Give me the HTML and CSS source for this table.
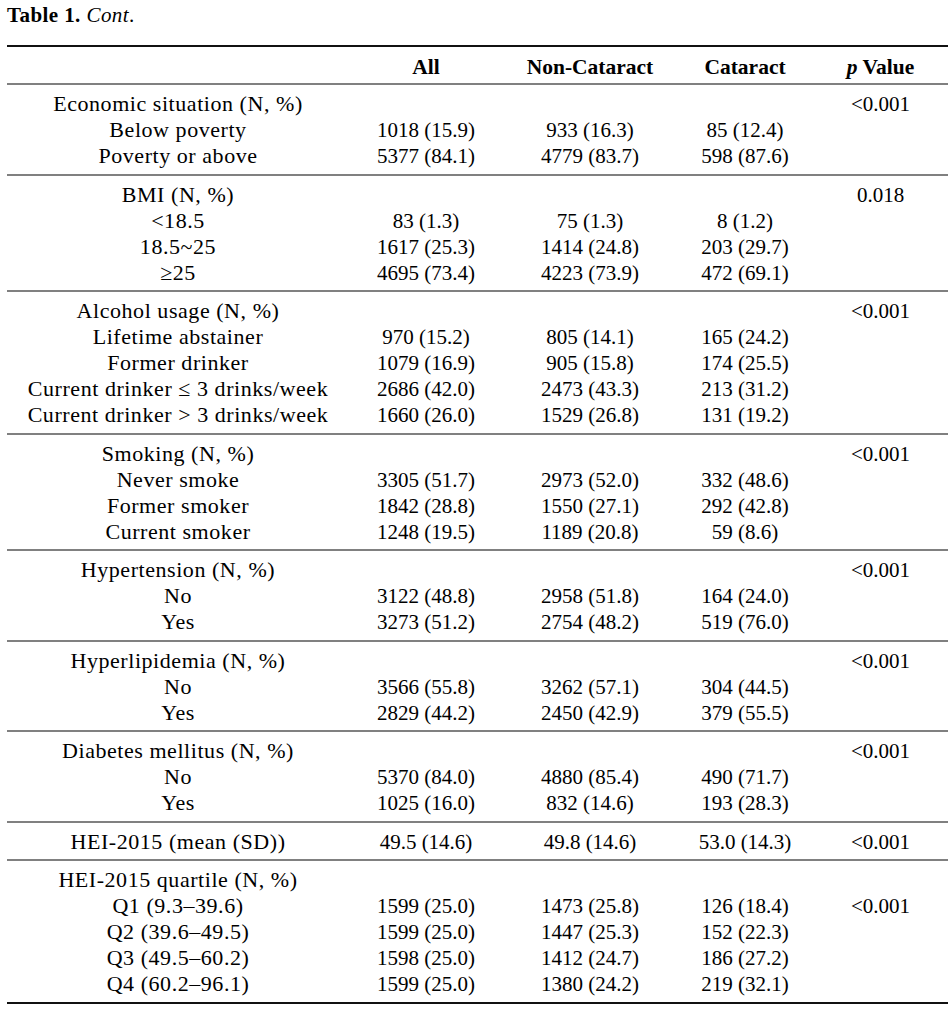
FILE: index.html
```html
<!DOCTYPE html>
<html lang="en">
<head>
<meta charset="utf-8">
<title>Table 1. Cont.</title>
<link rel="stylesheet" href="styles.css">
</head>
<body>
<div class="page">
  <div class="caption"><b>Table 1.</b> <i>Cont</i>.</div>
  <div class="table">
    <div class="row head">
      <div class="label"></div>
      <div>All</div>
      <div>Non-Cataract</div>
      <div>Cataract</div>
      <div><i>p</i> Value</div>
    </div>

    <div class="group">
      <div class="row"><div class="label">Economic situation (N, %)</div><div></div><div></div><div></div><div>&lt;0.001</div></div>
      <div class="row"><div class="label">Below poverty</div><div>1018 (15.9)</div><div>933 (16.3)</div><div>85 (12.4)</div><div></div></div>
      <div class="row"><div class="label">Poverty or above</div><div>5377 (84.1)</div><div>4779 (83.7)</div><div>598 (87.6)</div><div></div></div>
    </div>

    <div class="group">
      <div class="row"><div class="label">BMI (N, %)</div><div></div><div></div><div></div><div>0.018</div></div>
      <div class="row"><div class="label">&lt;18.5</div><div>83 (1.3)</div><div>75 (1.3)</div><div>8 (1.2)</div><div></div></div>
      <div class="row"><div class="label">18.5~25</div><div>1617 (25.3)</div><div>1414 (24.8)</div><div>203 (29.7)</div><div></div></div>
      <div class="row"><div class="label">&ge;25</div><div>4695 (73.4)</div><div>4223 (73.9)</div><div>472 (69.1)</div><div></div></div>
    </div>

    <div class="group">
      <div class="row"><div class="label">Alcohol usage (N, %)</div><div></div><div></div><div></div><div>&lt;0.001</div></div>
      <div class="row"><div class="label">Lifetime abstainer</div><div>970 (15.2)</div><div>805 (14.1)</div><div>165 (24.2)</div><div></div></div>
      <div class="row"><div class="label">Former drinker</div><div>1079 (16.9)</div><div>905 (15.8)</div><div>174 (25.5)</div><div></div></div>
      <div class="row"><div class="label">Current drinker &le; 3 drinks/week</div><div>2686 (42.0)</div><div>2473 (43.3)</div><div>213 (31.2)</div><div></div></div>
      <div class="row"><div class="label">Current drinker &gt; 3 drinks/week</div><div>1660 (26.0)</div><div>1529 (26.8)</div><div>131 (19.2)</div><div></div></div>
    </div>

    <div class="group">
      <div class="row"><div class="label">Smoking (N, %)</div><div></div><div></div><div></div><div>&lt;0.001</div></div>
      <div class="row"><div class="label">Never smoke</div><div>3305 (51.7)</div><div>2973 (52.0)</div><div>332 (48.6)</div><div></div></div>
      <div class="row"><div class="label">Former smoker</div><div>1842 (28.8)</div><div>1550 (27.1)</div><div>292 (42.8)</div><div></div></div>
      <div class="row"><div class="label">Current smoker</div><div>1248 (19.5)</div><div>1189 (20.8)</div><div>59 (8.6)</div><div></div></div>
    </div>

    <div class="group">
      <div class="row"><div class="label">Hypertension (N, %)</div><div></div><div></div><div></div><div>&lt;0.001</div></div>
      <div class="row"><div class="label">No</div><div>3122 (48.8)</div><div>2958 (51.8)</div><div>164 (24.0)</div><div></div></div>
      <div class="row"><div class="label">Yes</div><div>3273 (51.2)</div><div>2754 (48.2)</div><div>519 (76.0)</div><div></div></div>
    </div>

    <div class="group">
      <div class="row"><div class="label">Hyperlipidemia (N, %)</div><div></div><div></div><div></div><div>&lt;0.001</div></div>
      <div class="row"><div class="label">No</div><div>3566 (55.8)</div><div>3262 (57.1)</div><div>304 (44.5)</div><div></div></div>
      <div class="row"><div class="label">Yes</div><div>2829 (44.2)</div><div>2450 (42.9)</div><div>379 (55.5)</div><div></div></div>
    </div>

    <div class="group">
      <div class="row"><div class="label">Diabetes mellitus (N, %)</div><div></div><div></div><div></div><div>&lt;0.001</div></div>
      <div class="row"><div class="label">No</div><div>5370 (84.0)</div><div>4880 (85.4)</div><div>490 (71.7)</div><div></div></div>
      <div class="row"><div class="label">Yes</div><div>1025 (16.0)</div><div>832 (14.6)</div><div>193 (28.3)</div><div></div></div>
    </div>

    <div class="group">
      <div class="row"><div class="label">HEI-2015 (mean (SD))</div><div>49.5 (14.6)</div><div>49.8 (14.6)</div><div>53.0 (14.3)</div><div>&lt;0.001</div></div>
    </div>

    <div class="group">
      <div class="row"><div class="label">HEI-2015 quartile (N, %)</div><div></div><div></div><div></div><div></div></div>
      <div class="row"><div class="label">Q1 (9.3&ndash;39.6)</div><div>1599 (25.0)</div><div>1473 (25.8)</div><div>126 (18.4)</div><div>&lt;0.001</div></div>
      <div class="row"><div class="label">Q2 (39.6&ndash;49.5)</div><div>1599 (25.0)</div><div>1447 (25.3)</div><div>152 (22.3)</div><div></div></div>
      <div class="row"><div class="label">Q3 (49.5&ndash;60.2)</div><div>1598 (25.0)</div><div>1412 (24.7)</div><div>186 (27.2)</div><div></div></div>
      <div class="row"><div class="label">Q4 (60.2&ndash;96.1)</div><div>1599 (25.0)</div><div>1380 (24.2)</div><div>219 (32.1)</div><div></div></div>
    </div>
  </div>
</div>
</body>
</html>
```
FILE: styles.css
```css
html, body {
  margin: 0;
  padding: 0;
  background: #ffffff;
}

body {
  font-family: "Liberation Serif", "Times New Roman", serif;
  font-size: 21px;
  line-height: 26px;
  color: #000000;
}

.page {
  padding: 2px 0 0 7px;
}

.caption {
  height: 26px;
  margin-bottom: 17px;
  letter-spacing: 0.02em;
}

.caption b {
  font-weight: bold;
}

.table {
  width: 941px;
  border-top: 2px solid #111111;
  border-bottom: 2px solid #111111;
}

.row {
  display: grid;
  grid-template-columns: 342px 154px 174px 136px 135px;
  text-align: center;
  height: 26px;
  white-space: nowrap;
}

.head {
  height: 26px;
  padding: 7px 0 3px;
  font-weight: bold;
  font-size: 21.5px;
  border-bottom: 2px solid #808080;
}

.group {
  padding: 6px 0 4.5px;
}

.group + .group {
  border-top: 2px solid #808080;
}

.label {
  font-size: 22px;
  letter-spacing: 0.025em;
}
```
